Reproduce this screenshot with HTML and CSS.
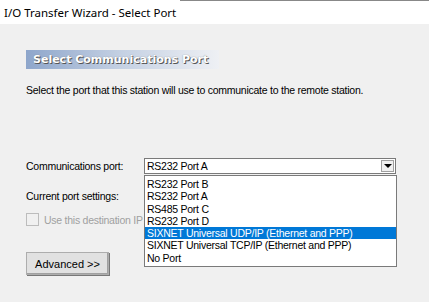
FILE: index.html
```html
<!DOCTYPE html>
<html lang="en">
<head>
    <meta charset="UTF-8">
    <title>I/O Transfer Wizard - Select Port</title>
    <link rel="stylesheet" href="styles.css">
</head>
<body>
    <div class="titlebar">
        <span class="title">I/O Transfer Wizard - Select Port</span>
    </div>
    <div class="page">
        <div class="banner">Select Communications Port</div>
        <p class="desc">Select the port that this station will use to communicate to the remote station.</p>

        <div class="row port-row">
            <span class="label">Communications port:</span>
            <div class="combo">
                <span class="combo-value">RS232 Port A</span>
                <span class="combo-btn"><span class="arrow"></span></span>
                <ul class="combo-list">
                    <li>RS232 Port B</li>
                    <li>RS232 Port A</li>
                    <li>RS485 Port C</li>
                    <li>RS232 Port D</li>
                    <li class="selected">SIXNET Universal UDP/IP (Ethernet and PPP)</li>
                    <li>SIXNET Universal TCP/IP (Ethernet and PPP)</li>
                    <li>No Port</li>
                </ul>
            </div>
        </div>

        <div class="row settings-row">
            <span class="label">Current port settings:</span>
        </div>

        <label class="row check-row">
            <span class="checkbox"></span>
            <span class="check-text">Use this destination IP</span>
        </label>

        <button class="advanced">Advanced &gt;&gt;</button>
    </div>
</body>
</html>
```

FILE: styles.css
```css
html, body {
    margin: 0;
    padding: 0;
}

body {
    width: 429px;
    height: 302px;
    overflow: hidden;
    background-color: #f0f0f0;
    font-family: 'Liberation Sans', Arial, sans-serif;
    font-size: 10.5px;
    letter-spacing: -0.25px;
    color: #000;
}

.titlebar {
    height: 24px;
    background-color: #fff;
    box-sizing: border-box;
    display: flex;
    align-items: center;
    padding-left: 4px;
    background-image: linear-gradient(to right, #fff 180px, #888 180px);
    background-size: 100% 1px;
    background-repeat: no-repeat;
}

.title {
    font-family: 'Noto Sans', sans-serif;
    font-size: 11.5px;
    letter-spacing: 0;
    color: #000;
}

.page {
    padding: 26px 0 0 26px;
}

.banner {
    width: 186px;
    height: 19px;
    line-height: 19px;
    padding-left: 7px;
    background: linear-gradient(to right, #8ea6cb, #c5d1e3 50%, #eef0f4);
    font-family: 'DejaVu Sans', Verdana, sans-serif;
    font-weight: bold;
    font-size: 11px;
    letter-spacing: 0;
    color: #fff;
    text-shadow: 1px 1px 0 #555, 0 0 1px #777;
}

.desc {
    margin: 15px 0 0;
    line-height: 13px;
}

.row {
    display: flex;
    align-items: center;
}

.label {
    width: 118px;
}

.port-row {
    margin-top: 61px;
    height: 16px;
}

.combo {
    position: relative;
    width: 252px;
    height: 16px;
    box-sizing: border-box;
    border: 1px solid #7a7a7a;
    background: #fff;
    display: flex;
    align-items: center;
}

.combo-value {
    flex: 1;
    padding-left: 2px;
}

.combo-btn {
    width: 13px;
    height: 12px;
    margin-right: 1px;
    box-sizing: border-box;
    border: 1px solid #a0a0a0;
    background: #f0f0f0;
    display: flex;
    align-items: center;
    justify-content: center;
}

.arrow {
    width: 0;
    height: 0;
    border-left: 4px solid transparent;
    border-right: 4px solid transparent;
    border-top: 4px solid #000;
}

.combo-list {
    position: absolute;
    top: 16px;
    left: -1px;
    width: 253px;
    margin: 0;
    padding: 2px 0 2px;
    list-style: none;
    box-sizing: border-box;
    border: 1px solid #7a7a7a;
    background: #fff;
    z-index: 2;
}

.combo-list li {
    height: 12.25px;
    line-height: 12px;
    padding-left: 2px;
}

.combo-list li.selected {
    background: #0078d7;
    color: #fff;
}

.settings-row {
    margin-top: 14px;
    height: 16px;
}

.check-row {
    margin-top: 8px;
    height: 15px;
    width: 118px;
    overflow: hidden;
    color: #a0a0a0;
    white-space: nowrap;
}

.checkbox {
    flex: none;
    width: 11px;
    height: 11px;
    border: 1px solid #bcbcbc;
    background: #f0f0f0;
    margin-right: 5px;
}

.advanced {
    display: block;
    margin-top: 25px;
    width: 83px;
    height: 23px;
    font-family: 'Liberation Sans', Arial, sans-serif;
    font-size: 11px;
    color: #000;
    background: #e1e1e1;
    border: 1px solid #adadad;
    box-shadow: inset -1px -1px 0 #a0a0a0, 1px 1px 0 #777;
    padding: 0;
}
```
